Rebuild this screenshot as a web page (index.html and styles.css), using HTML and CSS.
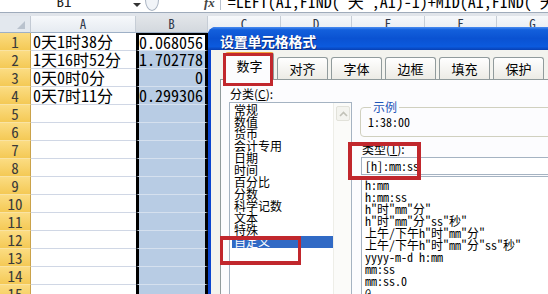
FILE: index.html
```html
<!DOCTYPE html>
<html lang="zh-CN">
  <head>
    <meta charset="UTF-8" />
    <meta name="viewport" content="width=device-width, initial-scale=1.0" />
    <title>设置单元格格式</title>
    <link rel="stylesheet" href="styles.css">
  </head>
  <body>
    <div class="formula-bar">
      <div class="fb-line">
        <div class="name-box">B1</div>
        <span class="drop"></span>
        <span class="fb-round"></span>
        <span class="fx">fx</span>
        <div class="formula">=LEFT(A1,FIND("天",A1)-1)+MID(A1,FIND("天",A1)+1,FIND("时",A1)-FIND("天",A1)-1)/24</div>
      </div>
    </div>
    <div class="fb-gap"></div>

    <div class="sheet">
      <div class="corner"><span class="tri"></span></div>
      <div class="col-h">A</div>
      <div class="col-h sel">B</div>
      <div class="col-h">C</div>
      <div class="col-h">D</div>
      <div class="col-h">E</div>
      <div class="col-h">F</div>
      <div class="col-h">G</div>

      <div class="row-h">1</div><div class="cell">0天1时38分</div><div class="cell b active">0.068056</div><div class="rest"></div>
      <div class="row-h">2</div><div class="cell">1天16时52分</div><div class="cell b">1.702778</div><div class="rest"></div>
      <div class="row-h">3</div><div class="cell">0天0时0分</div><div class="cell b">0</div><div class="rest"></div>
      <div class="row-h">4</div><div class="cell">0天7时11分</div><div class="cell b">0.299306</div><div class="rest"></div>
      <div class="row-h">5</div><div class="cell"></div><div class="cell b"></div><div class="rest"></div>
      <div class="row-h">6</div><div class="cell"></div><div class="cell b"></div><div class="rest"></div>
      <div class="row-h">7</div><div class="cell"></div><div class="cell b"></div><div class="rest"></div>
      <div class="row-h">8</div><div class="cell"></div><div class="cell b"></div><div class="rest"></div>
      <div class="row-h">9</div><div class="cell"></div><div class="cell b"></div><div class="rest"></div>
      <div class="row-h">10</div><div class="cell"></div><div class="cell b"></div><div class="rest"></div>
      <div class="row-h">11</div><div class="cell"></div><div class="cell b"></div><div class="rest"></div>
      <div class="row-h">12</div><div class="cell"></div><div class="cell b"></div><div class="rest"></div>
      <div class="row-h">13</div><div class="cell"></div><div class="cell b"></div><div class="rest"></div>
      <div class="row-h">14</div><div class="cell"></div><div class="cell b"></div><div class="rest"></div>
      <div class="row-h">15</div><div class="cell"></div><div class="cell b"></div><div class="rest"></div>
    </div>

    <div class="dialog">
      <div class="title">设置单元格格式</div>
      <div class="dlg-body">
        <div class="tabs">
          <div class="tab active">数字</div>
          <div class="tab">对齐</div>
          <div class="tab">字体</div>
          <div class="tab">边框</div>
          <div class="tab">填充</div>
          <div class="tab">保护</div>
        </div>
        <div class="panel">
          <div class="left-col">
            <div class="label">分类(<u>C</u>):</div>
            <div class="cat-box">
              <ul class="cat-list">
                <li>常规</li>
                <li>数值</li>
                <li>货币</li>
                <li>会计专用</li>
                <li>日期</li>
                <li>时间</li>
                <li>百分比</li>
                <li>分数</li>
                <li>科学记数</li>
                <li>文本</li>
                <li>特殊</li>
                <li class="picked">自定义</li>
              </ul>
              <div class="scroll">
                <div class="up">
                  <svg width="9" height="6" viewBox="0 0 9 6"><polyline points="1,5 4.5,1.5 8,5" fill="none" stroke="#c2c2b8" stroke-width="1.6"/></svg>
                </div>
              </div>
            </div>
          </div>
          <div class="right-col">
            <fieldset class="sample">
              <legend>示例</legend>
              <div class="sample-val">1:38:00</div>
            </fieldset>
            <div class="label type-label">类型(<u>T</u>):</div>
            <div class="type-input">[h]:mm:ss</div>
            <ul class="fmt-list">
              <li>h:mm</li>
              <li>h:mm:ss</li>
              <li>h"时"mm"分"</li>
              <li>h"时"mm"分"ss"秒"</li>
              <li>上午/下午h"时"mm"分"</li>
              <li>上午/下午h"时"mm"分"ss"秒"</li>
              <li>yyyy-m-d h:mm</li>
              <li>mm:ss</li>
              <li>mm:ss.0</li>
              <li>@</li>
            </ul>
          </div>
        </div>
      </div>
    </div>

    <!-- red marks drawn over the screenshot -->
    <div class="mark mark-tab"></div>
    <div class="mark mark-type"></div>
    <div class="mark mark-custom"></div>
  </body>
</html>
```

FILE: styles.css
```css
body {
  margin: 0;
  width: 548px;
  height: 294px;
  overflow: hidden;
  position: relative;
  background-color: #ffffff;
  font-family: "Noto Sans Mono CJK SC", "Noto Sans CJK SC", monospace;
  color: #000;
}

/* formula bar, cut off at the top */
.formula-bar {
  height: 12px;
  overflow: hidden;
  border-bottom: 1px solid #9fabbb;
  background-color: #fff;
}

.fb-line {
  display: flex;
  align-items: center;
  height: 20px;
  margin-top: -10px;
  font-size: 15px;
}

.fb-line > * {
  flex: none;
}

.name-box {
  width: 128px;
  text-align: center;
  color: #222;
}

.drop {
  width: 0;
  height: 0;
  margin-left: 5px;
  margin-top: 10px;
  border-left: 4px solid transparent;
  border-right: 4px solid transparent;
  border-top: 4px solid #333;
}

.fb-round {
  width: 12px;
  height: 20px;
  margin-left: 4px;
  border: 1px solid #aab4c2;
  border-radius: 50%;
  background-color: #f1f4f8;
}

.fx {
  margin-left: 45px;
  font-family: "Liberation Serif", serif;
  font-style: italic;
  font-weight: bold;
  font-size: 13px;
  margin-top: 6px;
  color: #444;
}

.formula {
  margin-left: 5px;
  padding-left: 7px;
  border-left: 1px solid #b9c2ce;
  white-space: nowrap;
  font-size: 16px;
  height: 20px;
  line-height: 22px;
}

.fb-gap {
  height: 3px;
  background-color: #e0e4ea;
}

/* worksheet */
.sheet {
  display: grid;
  grid-template-columns: 31px 105px 72px 73px 71px 73px 72px 72px;
  grid-template-rows: 17px;
  grid-auto-rows: 18px;
}

.sheet > div {
  box-sizing: border-box;
}

.corner {
  background-color: #e3e8ee;
  border-right: 1px solid #c3cad4;
  border-bottom: 1px solid #9eb0c6;
  position: relative;
}

.tri {
  position: absolute;
  right: 5px;
  bottom: 3px;
  width: 0;
  height: 0;
  border-left: 8px solid transparent;
  border-bottom: 8px solid #b9c2cd;
}

.col-h {
  background: linear-gradient(#f6f8fb, #e6ebf1);
  border-right: 1px solid #c6cdd6;
  border-bottom: 1px solid #9eb0c6;
  text-align: center;
  font-size: 13px;
  line-height: 16px;
  color: #30394a;
}

.col-h.sel {
  background: linear-gradient(#e2e5e9, #d3d8de);
}

.row-h {
  background: linear-gradient(#fbdc82, #f4c955);
  border-right: 1px solid #caa24a;
  border-bottom: 1px solid #f9e3a3;
  text-align: center;
  font-size: 15px;
  line-height: 18px;
  color: #3a3a3a;
}

.cell {
  border-bottom: 1px solid #d0d7e5;
  font-size: 16px;
  line-height: 17px;
  padding-left: 2px;
  white-space: nowrap;
}

.cell.b {
  background-color: #b8cce4;
  border-left: 3px solid #000;
  border-right: 3px solid #000;
  border-bottom: 1px solid #d5e0ee;
  text-align: right;
  padding-left: 0;
  padding-right: 2px;
}

.cell.b.active {
  background-color: #fff;
  border-top: 2px solid #000;
  line-height: 15px;
}

.rest {
  border-bottom: 1px solid #d0d7e5;
  grid-column: span 5;
}

/* format cells dialog, lying over the sheet */
.dialog {
  position: absolute;
  left: 208px;
  top: 27px;
  width: 350px;
  height: 275px;
  display: flex;
  flex-direction: column;
  background-color: #0b45cf;
  border-radius: 8px 0 0 0;
  overflow: hidden;
  font-family: "Noto Sans CJK SC", sans-serif;
}

.title {
  height: 26px;
  box-sizing: border-box;
  padding: 5px 0 0 12px;
  background: linear-gradient(#4a8cf0 0%, #1360dc 12%, #0a52d2 50%, #0b5ade 85%, #0840b4 100%);
  color: #fff;
  font-weight: bold;
  font-size: 14px;
  line-height: 18px;
  letter-spacing: -0.3px;
  text-shadow: 1px 1px 0 #0b2a7a;
}

.dlg-body {
  flex: 1;
  margin-left: 3px;
  background-color: #f3f3ee;
}

.tabs {
  display: flex;
  align-items: flex-end;
  gap: 3px;
  height: 29px;
  padding-left: 14px;
  position: relative;
  z-index: 2;
}

.tab {
  width: 51px;
  height: 22px;
  box-sizing: border-box;
  border: 1px solid #919b9c;
  border-bottom: none;
  border-radius: 3px 3px 0 0;
  background: linear-gradient(#ffffff, #ecebe5);
  text-align: center;
  font-size: 13px;
  line-height: 22px;
}

.tab.active {
  width: 49px;
  height: 28px;
  margin-bottom: -1px;
  border-top: 2px solid #f1a33a;
  background: #fcfcfe;
  line-height: 24px;
}

.panel {
  margin-left: 9px;
  height: 220px;
  border: 1px solid #919b9c;
  background-color: #fcfcfe;
  display: grid;
  grid-template-columns: 123px 1fr;
  column-gap: 9px;
  padding: 7px 0 0 8px;
  font-size: 12px;
}

.label {
  height: 15px;
  line-height: 14px;
  padding-left: 1px;
}

.label u {
  text-decoration: underline;
}

.cat-box {
  display: flex;
  height: 200px;
  border: 1px solid #a5b3c2;
  background-color: #fff;
}

.cat-list {
  flex: 1;
  list-style: none;
  margin: 0;
  padding: 1px 0 0 2px;
}

.cat-list li {
  height: 12px;
  line-height: 12px;
  padding-left: 2px;
  white-space: nowrap;
}

.cat-list li.picked {
  background-color: #316ac5;
  color: #fff;
}

.scroll {
  width: 17px;
  background-color: #fbfbf9;
  border-left: 1px solid #eeeee8;
}

.up {
  margin: 3px 1px 0 2px;
  height: 13px;
  border: 1px solid #e2e2da;
  border-radius: 2px;
  background-color: #f4f4ef;
  display: flex;
  align-items: center;
  justify-content: center;
}

.right-col {
  min-width: 0;
}

.sample {
  margin: 14px 0 0 -1px;
  padding: 0 0 6px 7px;
  border: 1px solid #d0d0bf;
  border-radius: 4px;
}

.sample legend {
  margin-left: 3px;
  padding: 0 2px;
  line-height: 12px;
  color: #1d55b8;
}

.sample-val {
  font-family: "Noto Sans Mono CJK SC", "Noto Sans CJK SC", monospace;
  line-height: 16px;
  margin-top: 1px;
}

.type-label {
  margin-top: 5px;
}

.type-input {
  height: 18px;
  box-sizing: border-box;
  border: 1px solid #a5b3c2;
  background-color: #fff;
  padding-left: 3px;
  line-height: 16px;
  font-family: "Noto Sans Mono CJK SC", "Noto Sans CJK SC", monospace;
}

.fmt-list {
  list-style: none;
  margin: 1px 0 0 0;
  padding: 2px 0 0 2px;
  height: 140px;
  border: 1px solid #a5b3c2;
  border-right: none;
  background-color: #fff;
  font-family: "Noto Sans Mono CJK SC", "Noto Sans CJK SC", monospace;
}

.fmt-list li {
  height: 12px;
  line-height: 12px;
  padding-left: 1px;
  white-space: nowrap;
}

/* red annotation boxes */
.mark {
  position: absolute;
  box-sizing: border-box;
  border: 3px solid #c1272d;
  z-index: 5;
}

.mark-tab {
  left: 223px;
  top: 53px;
  width: 50px;
  height: 33px;
}

.mark-type {
  left: 348px;
  top: 142px;
  width: 73px;
  height: 38px;
  border-width: 4px;
}

.mark-custom {
  left: 220px;
  top: 236px;
  width: 81px;
  height: 29px;
  border-width: 4px 3px 4px 3px;
}
```
